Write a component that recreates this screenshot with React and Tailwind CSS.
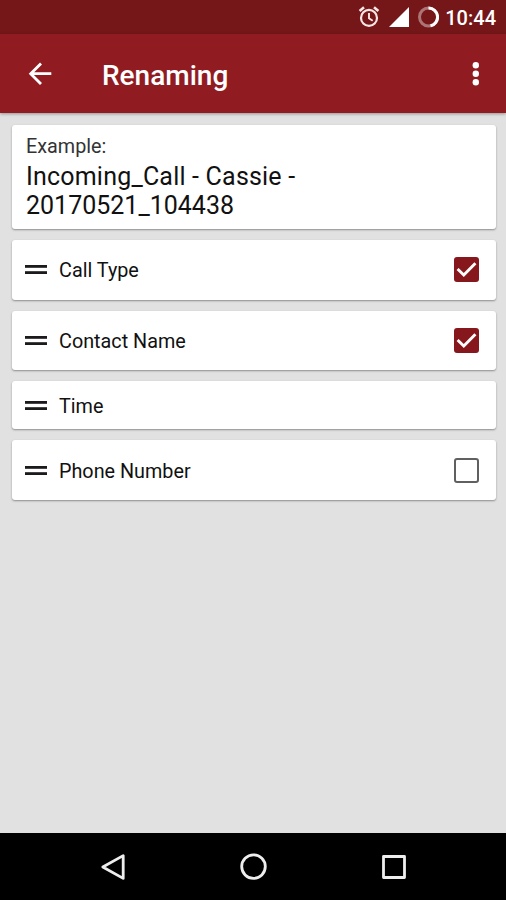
import React from 'react';

const fields = [
  { label: 'Call Type', checked: true },
  { label: 'Contact Name', checked: true },
  { label: 'Time' },
  { label: 'Phone Number', checked: false },
];

function StatusBar() {
  return (
    <div className="h-[34px] shrink-0 bg-[#751718] flex items-center justify-end pr-[10px] text-white">
      <svg className="w-6 h-6 mr-[8px]" viewBox="0 0 24 24" fill="none" stroke="#f8e6e6" strokeWidth="2.2">
        <circle cx="12" cy="12.9" r="8" />
        <path d="M12 8v5.3l3.7 2.4" strokeWidth="1.9" />
        <path d="M2.6 6 7 2.3M21.4 6 17 2.3" strokeWidth="2.6" />
      </svg>
      <svg className="w-[20px] h-[20px] mr-[8px]" viewBox="0 0 20 20">
        <path d="M20 0v20H0z" fill="#fff" />
      </svg>
      <svg className="w-[22px] h-[22px] mr-[6px]" viewBox="0 0 22 22" fill="none" strokeWidth="3">
        <circle cx="11.5" cy="11" r="9" stroke="#ac7475" />
        <path d="M11.5 2a9 9 0 0 1 2 17.8" stroke="#fff" />
      </svg>
      <span className="text-[20px] leading-none font-medium mt-[2px]">10:44</span>
    </div>
  );
}

function Toolbar() {
  return (
    <div className="h-[79px] shrink-0 bg-[#901c22] flex items-center pl-[28px] pr-[20px] text-white shadow-[0_1px_3px_rgba(0,0,0,0.35)]">
      <svg className="w-6 h-6" viewBox="0 0 24 24" fill="none" stroke="#fff" strokeWidth="2.8">
        <path d="M23.3 11.7H3M13 1.4 2.7 11.7 13 22" />
      </svg>
      <h1 className="ml-[50px] mt-[4px] flex-1 text-[28px] leading-none font-medium">Renaming</h1>
      <svg className="w-5 h-6" viewBox="0 0 20 24" fill="#fff">
        <circle cx="9.8" cy="3.2" r="3.2" />
        <circle cx="9.8" cy="11.7" r="3.2" />
        <circle cx="9.8" cy="20.2" r="3.2" />
      </svg>
    </div>
  );
}

function Checkbox({ checked }) {
  if (!checked) {
    return <span className="w-[25.5px] h-[25px] rounded-[3px] border-2 border-[#606060]" />;
  }
  return (
    <span className="w-[25.5px] h-[25px] rounded-[3px] bg-[#86181d]">
      <svg className="w-[25px] h-[25px]" viewBox="0 0 25 25" fill="none" stroke="#fff" strokeWidth="2.9">
        <path d="M3.6 12 9.8 18 21.4 6.3" />
      </svg>
    </span>
  );
}

function FieldRow({ label, checked }) {
  const hasCheckbox = checked !== undefined;
  return (
    <div
      className={`${hasCheckbox ? 'h-[59.5px]' : 'h-[48.3px]'} flex items-center pl-[12.5px] pr-[16.5px] bg-white rounded-[3px] shadow-[0_1px_2px_rgba(0,0,0,0.38)]`}
    >
      <svg className="w-[22px] h-[9px]" viewBox="0 0 22 9" fill="#1c1a1c">
        <rect width="22" height="2.8" />
        <rect y="6.2" width="22" height="2.8" />
      </svg>
      <span className="ml-[12.5px] mt-[3px] flex-1 text-[19.8px] leading-none text-[#111]">{label}</span>
      {hasCheckbox && <Checkbox checked={checked} />}
    </div>
  );
}

function NavBar() {
  return (
    <div className="h-[67px] shrink-0 bg-black flex items-center justify-between pl-[99px] pr-[98px]">
      <svg className="w-7 h-7" viewBox="0 0 28 28" fill="none" stroke="#eee" strokeWidth="2.8" strokeLinejoin="round">
        <path d="M24.2 2.6v22.8L3.8 14z" />
      </svg>
      <svg className="w-7 h-7" viewBox="0 0 28 28" fill="none" stroke="#eee" strokeWidth="2.8">
        <circle cx="13.5" cy="13.6" r="11.8" />
      </svg>
      <svg className="w-7 h-7" viewBox="0 0 28 28" fill="none" stroke="#eee" strokeWidth="2.8" strokeLinejoin="round">
        <rect x="3.5" y="3.5" width="21" height="21" />
      </svg>
    </div>
  );
}

export default function App() {
  return (
    <div className="w-[506px] h-[900px] flex flex-col bg-[#e1e1e1] font-['Roboto',sans-serif] overflow-hidden">
      <StatusBar />
      <Toolbar />
      <div className="flex-1 flex flex-col gap-[11px] pt-[12px] pl-[12px] pr-[10.5px]">
        <div className="h-[104px] pl-[14px] pt-[10px] bg-white rounded-[3px] shadow-[0_1px_2px_rgba(0,0,0,0.38)]">
          <p className="text-[19.8px] leading-[24px] text-[#333]">Example:</p>
          <p className="mt-[3px] text-[25px] leading-[29px] text-[#111]">
            <span className="tracking-[0.2px]">Incoming_Call - Cassie -</span>
            <br />
            20170521_104438
          </p>
        </div>
        {fields.map((field) => (
          <FieldRow key={field.label} {...field} />
        ))}
      </div>
      <NavBar />
    </div>
  );
}
